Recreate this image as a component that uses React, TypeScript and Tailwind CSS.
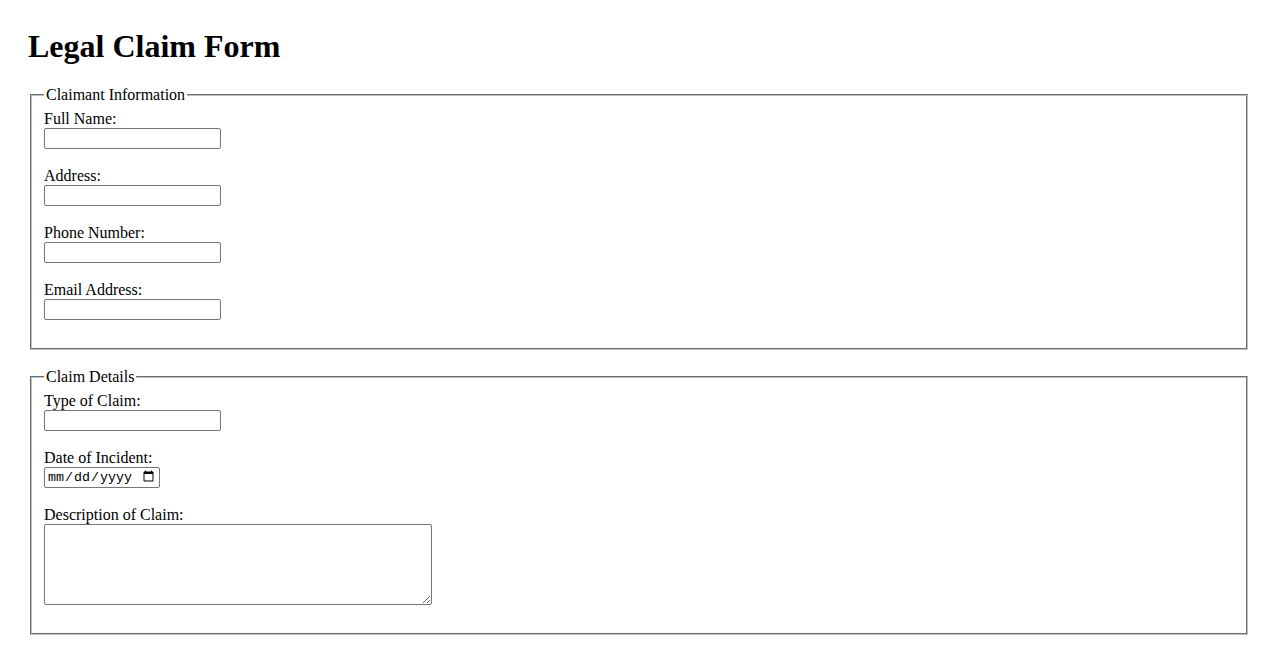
import React from "react";

const inputCls =
  "inline-block w-[177px] h-[21px] border border-[#767676] rounded-[2px] px-[2px] py-[1px] text-[13.333px] font-['Liberation_Sans',Arial,sans-serif] bg-white align-baseline";

function Field({ label, type = "text" }: { label: string; type?: string }) {
  return (
    <>
      <label>{label}</label>
      <br />
      <input type={type} className={inputCls} />
      <br />
      <br />
    </>
  );
}

export default function App() {
  return (
    <div className="min-h-[650px] bg-white p-[28px] pt-[28px] font-['Liberation_Serif','Times_New_Roman',serif] text-[16px] leading-[normal] text-black">
      <h1 className="mb-[21.44px] text-[32px] font-bold leading-[normal]">Legal Claim Form</h1>
      <form>
        <fieldset className="mx-[2px] border-2 border-[rgb(192,192,192)] px-[12px] pt-[5.6px] pb-[10px] [border-style:groove]">
          <legend className="px-[2px]">Claimant Information</legend>
          <Field label="Full Name:" />
          <Field label="Address:" />
          <Field label="Phone Number:" />
          <Field label="Email Address:" />
        </fieldset>
        <br />
        <fieldset className="mx-[2px] border-2 border-[rgb(192,192,192)] px-[12px] pt-[5.6px] pb-[6px] [border-style:groove]">
          <legend className="px-[2px]">Claim Details</legend>
          <Field label="Type of Claim:" />
          <label>Date of Incident:</label>
          <br />
          <input
            type="date"
            className="inline-block h-[21px] w-[116px] border border-[#767676] rounded-[2px] px-[2px] py-[1px] text-[13.333px] font-['Liberation_Mono',monospace] bg-white align-baseline"
          />
          <br />
          <br />
          <label>Description of Claim:</label>
          <br />
          <textarea className="inline-block h-[81px] w-[388px] border border-[#767676] rounded-[2px] px-[2px] py-[2px] text-[13.333px] font-['Liberation_Mono',monospace] bg-white align-baseline" />
          <br />
          <br />
        </fieldset>
      </form>
    </div>
  );
}
